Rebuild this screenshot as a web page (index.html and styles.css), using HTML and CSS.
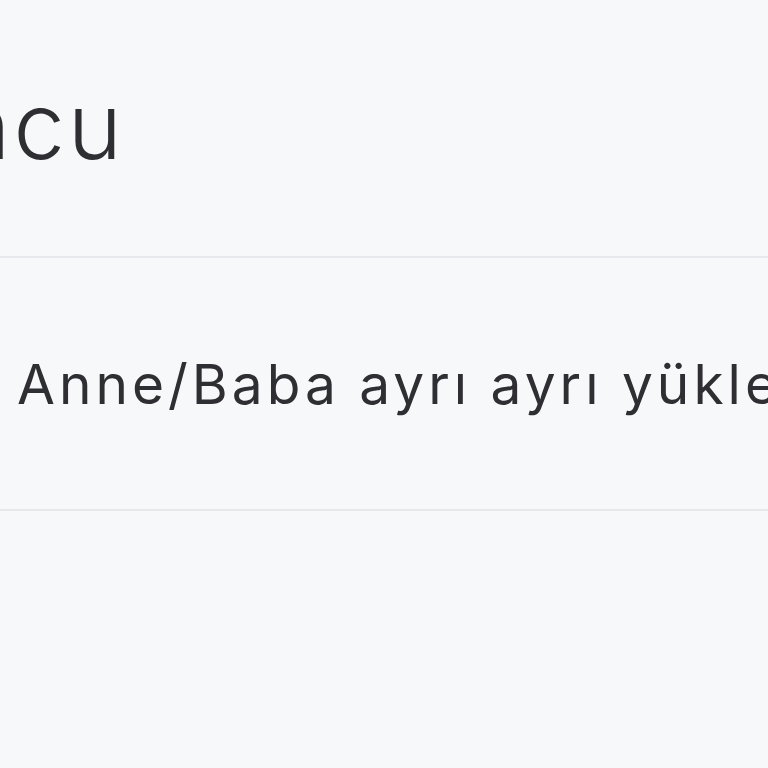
FILE: index.html
```html
<!DOCTYPE html>
<html lang="tr">
<head>
<meta charset="utf-8">
<title>Oyuncu</title>
<link rel="stylesheet" href="styles.css">
</head>
<body>
<div class="page">
  <header class="head">
    <h1 class="title"><span class="title-text">Oyuncu</span></h1>
  </header>
  <section class="row">
    <p class="row-text">Anne/Baba ayrı ayrı yüklenmelidir</p>
  </section>
</div>
</body>
</html>
```
FILE: styles.css
```css
html, body {
  margin: 0;
  padding: 0;
  background: #f7f8fa;
  overflow: hidden;
}
.page {
  width: 768px;
  height: 768px;
  overflow: hidden;
  font-family: Inter, "Open Sans", sans-serif;
  color: #2e2e33;
}
.head {
  height: 256px;
  display: flex;
  align-items: flex-start;
}
.title {
  margin: 0;
  padding-top: 71px;
  font-size: 92px;
  font-weight: 300;
  line-height: 110px;
  letter-spacing: 3px;
  white-space: nowrap;
  display: flex;
  justify-content: flex-end;
  width: 125px;
}
.row {
  border-top: 2px solid #e6e8ec;
  border-bottom: 2px solid #e6e8ec;
  height: 251px;
  display: flex;
  align-items: center;
  padding-left: 17px;
}
.row-text {
  margin: 0;
  font-size: 55px;
  font-weight: 400;
  letter-spacing: 4px;
  white-space: nowrap;
  line-height: 60px;
}
```
